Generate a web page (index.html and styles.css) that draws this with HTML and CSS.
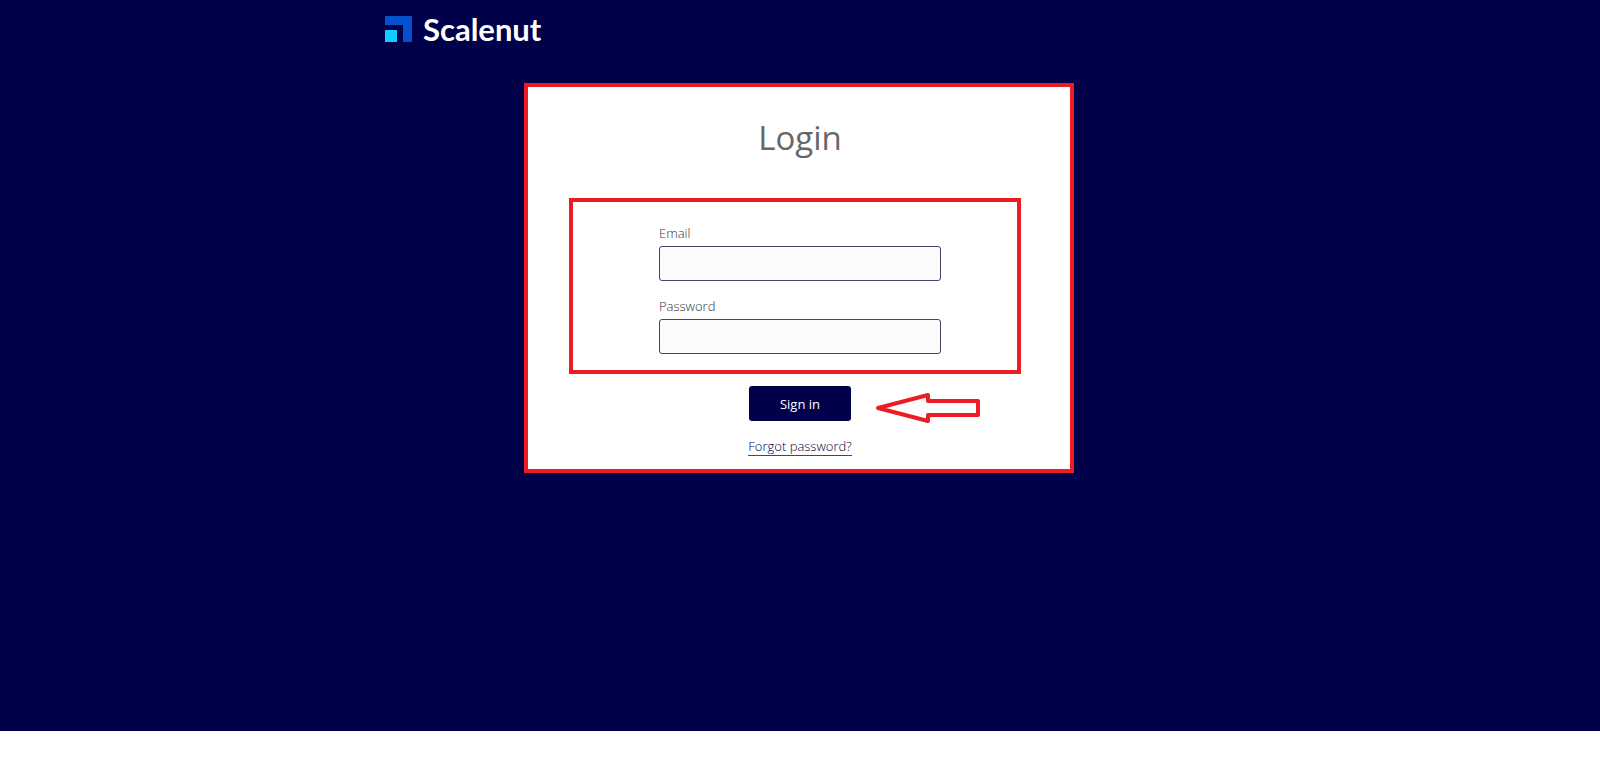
FILE: index.html
```html
<!DOCTYPE html>
<html lang="en">
<head>
  <meta charset="UTF-8">
  <meta name="viewport" content="width=device-width, initial-scale=1.0">
  <title>Login - Scalenut</title>
  <link rel="stylesheet" href="styles.css">
</head>
<body>
  <div class="page">
    <header class="header">
      <a class="brand" href="#">
        <svg class="brand-mark" viewBox="0 0 27 26" aria-hidden="true">
          <path d="M0 0h27v26h-9V9H0z" fill="#0550cf"/>
          <path d="M0 14h12v12H0z" fill="#12cbff"/>
        </svg>
        <span class="brand-name">Scalenut</span>
      </a>
    </header>
    <main class="main">
      <form class="card">
        <h1 class="title">Login</h1>
        <div class="fields">
          <label for="email">Email</label>
          <input type="email" id="email" name="email">
          <label for="password">Password</label>
          <input type="password" id="password" name="password">
        </div>
        <div class="actions">
          <button type="submit">Sign in</button>
          <svg class="arrow" viewBox="0 0 106 32" aria-hidden="true">
            <path d="M3 16 53 3v6h50v14H53v6z" fill="#fff" stroke="#ec1c24" stroke-width="4" stroke-linejoin="round"/>
          </svg>
        </div>
        <a class="forgot" href="#">Forgot password?</a>
      </form>
    </main>
  </div>
</body>
</html>
```

FILE: styles.css
```css
body {
  margin: 0;
  background: #fff;
  font-family: "Open Sans", sans-serif;
  font-size: 13px;
  font-weight: 300;
  color: #333;
}
.page {
  min-height: calc(100vh - 32px);
  background: #01004a;
}
.header {
  display: flex;
  max-width: 830px;
  height: 58px;
  margin: 0 auto;
  align-items: center;
}
.brand {
  display: flex;
  align-items: center;
  gap: 11px;
  color: #fff;
  text-decoration: none;
}
.brand-mark {
  width: 27px;
  height: 26px;
}
.brand-name {
  font-family: Lato, sans-serif;
  font-size: 31px;
  font-weight: 700;
  line-height: 26px;
}
.main {
  padding: 25px 2px 0 0;
}
.card {
  display: flex;
  flex-direction: column;
  align-items: center;
  box-sizing: border-box;
  max-width: 550px;
  margin: 0 auto;
  padding: 30px 39px 13px 41px;
  background: #fff;
  border: 4px solid #ec1c24;
}
.title {
  margin: 0;
  font-size: 33px;
  font-weight: 400;
  line-height: 42px;
  color: #666;
}
.fields {
  display: flex;
  flex-direction: column;
  align-self: flex-start;
  box-sizing: border-box;
  width: 100%;
  max-width: 452px;
  margin-top: 39px;
  padding: 22px 76px 16px 86px;
  border: 4px solid #ec1c24;
}
label {
  line-height: 18px;
}
input {
  box-sizing: border-box;
  width: 100%;
  height: 35px;
  margin: 4px 0 16px;
  padding: 0 10px;
  font: inherit;
  background: #fbfbfb;
  border: 1px solid #43426e;
  border-radius: 3px;
}
input:last-child {
  margin-bottom: 0;
}
.actions {
  position: relative;
  margin-top: 12px;
}
button {
  display: block;
  width: 102px;
  height: 35px;
  padding: 0;
  font: inherit;
  font-weight: 500;
  color: #fff;
  background: #01004a;
  border: 0;
  border-radius: 3px;
}
.arrow {
  position: absolute;
  top: 6px;
  left: 126px;
  width: 106px;
  height: 32px;
}
.forgot {
  margin-top: 17px;
  line-height: 17px;
  color: #01004a;
  text-decoration: none;
  border-bottom: 1px solid #43426e;
}
```
